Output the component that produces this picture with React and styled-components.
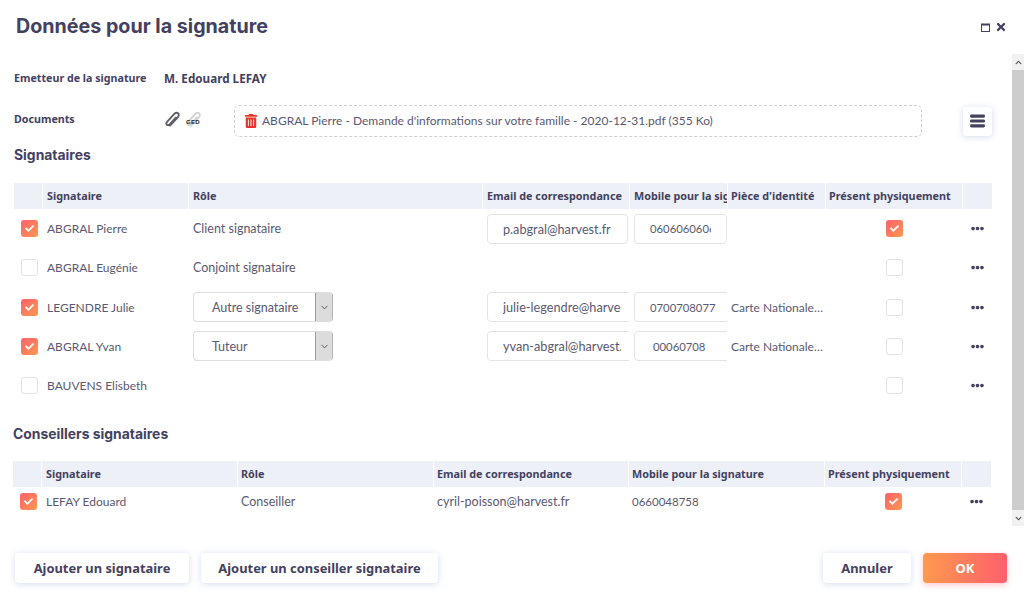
import React from "react";
import styled, { createGlobalStyle } from "styled-components";
import {
  FaCheck,
  FaChevronDown,
  FaChevronUp,
  FaEllipsisH,
  FaTimes,
  FaTrashAlt,
} from "react-icons/fa";
import { ChevronDown } from "lucide-react";

const INK = "#43415f";
const TEXT = "#5a5973";
const HEAD_BG = "#edf0f7";
const SIGNER_COLS = "28px 145px 293px 146px 97px 97px 136px 29px";
const ADVISOR_COLS = "28px 195px 195px 194px 195px 136px 29px";

const signers = [
  { name: "ABGRAL Pierre", checked: true, role: "Client signataire", email: "p.abgral@harvest.fr", mobile: "0606060606", present: true, fit: true },
  { name: "ABGRAL Eugénie", role: "Conjoint signataire" },
  { name: "LEGENDRE Julie", checked: true, select: "Autre signataire", email: "julie-legendre@harvest.fr", mobile: "0700708077", piece: "Carte Nationale d'identité" },
  { name: "ABGRAL Yvan", checked: true, select: "Tuteur", email: "yvan-abgral@harvest.fr", mobile: "00060708", piece: "Carte Nationale d'identité", indent: 18 },
  { name: "BAUVENS Elisbeth" },
];

const App = () => (
  <>
    <GlobalStyle />
    <Dialog>
      <TitleBar>
        <Title>Données pour la signature</Title>
        <WindowActions>
          <MaximizeIcon />
          <FaTimes size={12} />
        </WindowActions>
      </TitleBar>
      <Middle>
        <Body>
          <InfoRow>
            <InfoLabel>Emetteur de la signature</InfoLabel>
            <InfoValue>M. Edouard LEFAY</InfoValue>
          </InfoRow>
          <DocumentsRow>
            <InfoLabel $raised>Documents</InfoLabel>
            <AttachIcons>
              <ClipIcon />
              <GedIcon>
                <ClipIcon $light />
                <GedText>GED</GedText>
              </GedIcon>
            </AttachIcons>
            <DropZone>
              <FaTrashAlt size={14} color="#e8352a" />
              <span>ABGRAL Pierre - Demande d'informations sur votre famille - 2020-12-31.pdf (355 Ko)</span>
            </DropZone>
            <MenuButton>
              <BarsIcon />
            </MenuButton>
          </DocumentsRow>
          <SectionTitle>Signataires</SectionTitle>
          <Table>
            <HeadRow $cols={SIGNER_COLS}>
              <HeadCell />
              <HeadCell>Signataire</HeadCell>
              <HeadCell>Rôle</HeadCell>
              <HeadCell>Email de correspondance</HeadCell>
              <HeadCell>Mobile pour la signature</HeadCell>
              <HeadCell $tight>Pièce d'identité</HeadCell>
              <HeadCell $tight>Présent physiquement</HeadCell>
              <HeadCell />
            </HeadRow>
            {signers.map((s) => (
              <Row key={s.name} $cols={SIGNER_COLS} $height="39.25px">
                <Cell>
                  <Checkbox $checked={s.checked}>{s.checked && <FaCheck size={9} />}</Checkbox>
                </Cell>
                <NameCell>{s.name}</NameCell>
                <Cell>
                  {s.select ? (
                    <SelectBox>
                      <SelectValue>{s.select}</SelectValue>
                      <SelectArrow>
                        <ChevronDown size={11} strokeWidth={1.8} />
                      </SelectArrow>
                    </SelectBox>
                  ) : (
                    s.role
                  )}
                </Cell>
                <Cell>
                  {s.email && <Input $width={s.fit ? "141px" : "150px"} readOnly value={s.email} />}
                </Cell>
                <Cell>
                  {s.mobile && (
                    <Input
                      $width={s.fit ? "93px" : "110px"}
                      $indent={s.indent || 15}
                      $size="11.3px"
                      readOnly
                      value={s.mobile}
                    />
                  )}
                </Cell>
                <NameCell $tight>{s.piece && <Ellipsis>{s.piece}</Ellipsis>}</NameCell>
                <Cell $center>
                  <Checkbox $checked={s.present}>{s.present && <FaCheck size={9} />}</Checkbox>
                </Cell>
                <Cell $center>
                  <FaEllipsisH size={13} color={INK} />
                </Cell>
              </Row>
            ))}
          </Table>
          <SectionTitle $advisors>Conseillers signataires</SectionTitle>
          <Table $advisors>
            <HeadRow $cols={ADVISOR_COLS}>
              <HeadCell />
              <HeadCell>Signataire</HeadCell>
              <HeadCell $tight>Rôle</HeadCell>
              <HeadCell $tight>Email de correspondance</HeadCell>
              <HeadCell $tight>Mobile pour la signature</HeadCell>
              <HeadCell $tight>Présent physiquement</HeadCell>
              <HeadCell />
            </HeadRow>
            <Row $cols={ADVISOR_COLS} $height="28px">
              <Cell>
                <Checkbox $checked>
                  <FaCheck size={9} />
                </Checkbox>
              </Cell>
              <NameCell>LEFAY Edouard</NameCell>
              <Cell $tight>Conseiller</Cell>
              <Cell $tight>cyril-poisson@harvest.fr</Cell>
              <NumberCell $tight>0660048758</NumberCell>
              <Cell $center>
                <Checkbox $checked>
                  <FaCheck size={9} />
                </Checkbox>
              </Cell>
              <Cell $center>
                <FaEllipsisH size={13} color={INK} />
              </Cell>
            </Row>
          </Table>
        </Body>
        <Scrollbar>
          <ScrollArrow>
            <FaChevronUp size={7} />
          </ScrollArrow>
          <ScrollThumb />
          <ScrollArrow>
            <FaChevronDown size={7} />
          </ScrollArrow>
        </Scrollbar>
      </Middle>
      <Footer>
        <FooterGroup>
          <Button $width="174px">Ajouter un signataire</Button>
          <Button $width="237px">Ajouter un conseiller signataire</Button>
        </FooterGroup>
        <FooterGroup>
          <Button $width="88px">Annuler</Button>
          <Button $width="84px" $primary>
            OK
          </Button>
        </FooterGroup>
      </Footer>
    </Dialog>
  </>
);

const ClipIcon = ({ $light }) => (
  <svg width="17" height="17" viewBox="0 0 17 17" fill="none">
    <path
      d="M6 14.5 14 6c1.1-1.2 1-2.8 0-3.7-1-.9-2.4-.7-3.4.4L3 10.8c-.9 1-.9 2.2-.1 2.9.8.7 1.9.5 2.7-.3l6.2-6.8"
      stroke={$light ? "#d4d4d4" : "#5f5f68"}
      strokeWidth="1.9"
      strokeLinecap="round"
    />
  </svg>
);

const MaximizeIcon = () => (
  <svg width="9" height="9" viewBox="0 0 9 9" fill="none">
    <rect x="0.5" y="1" width="8" height="7.5" stroke={INK} />
    <rect x="0.5" y="1" width="8" height="1.5" fill={INK} />
  </svg>
);

const BarsIcon = () => (
  <svg width="15" height="14" viewBox="0 0 15 14" fill={INK}>
    <rect x="0" y="0.5" width="15" height="3.2" rx="1.4" />
    <rect x="0" y="5.4" width="15" height="3.2" rx="1.4" />
    <rect x="0" y="10.3" width="15" height="3.2" rx="1.4" />
  </svg>
);

export default App;

const GlobalStyle = createGlobalStyle`
  html, body {
    margin: 0;
    padding: 0;
    background: #fff;
  }
  body {
    font-family: "Lato", "Noto Sans", sans-serif;
    font-size: 12px;
    color: ${TEXT};
  }
`;

const Dialog = styled.div`
  width: 1024px;
  height: 599px;
  display: flex;
  flex-direction: column;
  overflow: hidden;
`;

const TitleBar = styled.div`
  height: 54px;
  flex: none;
  display: flex;
  align-items: center;
  justify-content: space-between;
  padding: 0 17px 0 16px;
`;

const Title = styled.h1`
  margin: 0 0 2px;
  font-family: "Inter", sans-serif;
  font-size: 19.7px;
  font-weight: 700;
  color: ${INK};
`;

const WindowActions = styled.div`
  display: flex;
  align-items: center;
  gap: 5px;
  color: ${INK};
`;

const Middle = styled.div`
  height: 472px;
  flex: none;
  display: flex;
  justify-content: space-between;
`;

const Body = styled.div`
  width: 978px;
  margin-left: 14px;
  padding-top: 8px;
`;

const InfoRow = styled.div`
  height: 32px;
  display: flex;
  align-items: center;
`;

const DocumentsRow = styled(InfoRow)`
  margin-top: 11px;
`;

const InfoLabel = styled.div`
  width: 150px;
  padding-bottom: ${({ $raised }) => ($raised ? "4px" : "0")};
  font-family: "Noto Sans", sans-serif;
  font-size: 10.7px;
  font-weight: 700;
  color: ${INK};
`;

const InfoValue = styled.div`
  font-family: "Noto Sans", sans-serif;
  font-size: 11.7px;
  font-weight: 700;
  color: ${INK};
`;

const AttachIcons = styled.div`
  width: 70px;
  display: flex;
  align-items: center;
  gap: 4px;
  padding-bottom: 4px;
`;

const GedIcon = styled.div`
  position: relative;
  width: 17px;
  height: 17px;
`;

const GedText = styled.span`
  position: absolute;
  left: 1px;
  top: 8px;
  font-family: "Liberation Sans", sans-serif;
  font-size: 6px;
  font-weight: 700;
  letter-spacing: 0.3px;
  color: #222;
`;

const DropZone = styled.div`
  width: 688px;
  height: 32px;
  box-sizing: border-box;
  display: flex;
  align-items: center;
  gap: 4px;
  padding: 0 0 1px 9px;
  border: 1px dashed #cfcfcf;
  border-radius: 5px;
`;

const MenuButton = styled.div`
  width: 29px;
  height: 29px;
  margin-left: 41px;
  display: flex;
  align-items: center;
  justify-content: center;
  border-radius: 4px;
  background: #fff;
  box-shadow: 0 1px 6px rgba(90, 110, 200, 0.25);
`;

const SectionTitle = styled.h2`
  height: 20px;
  margin: ${({ $advisors }) => ($advisors ? "19px 0 17px -1px" : "8px 0 18px")};
  font-family: "Inter", sans-serif;
  font-size: 13.9px;
  font-weight: 700;
  line-height: 20px;
  color: ${INK};
`;

const Table = styled.div`
  margin-left: ${({ $advisors }) => ($advisors ? "-1px" : "0")};
`;

const HeadRow = styled.div`
  display: grid;
  grid-template-columns: ${({ $cols }) => $cols};
  gap: 1px;
  height: 26px;
`;

const HeadCell = styled.div`
  display: flex;
  align-items: center;
  padding: 0 0 2px ${({ $tight }) => ($tight ? "3px" : "4px")};
  background: ${HEAD_BG};
  font-family: "Noto Sans", sans-serif;
  font-size: 10.8px;
  font-weight: 700;
  color: ${INK};
  white-space: nowrap;
  overflow: hidden;
`;

const Row = styled.div`
  display: grid;
  grid-template-columns: ${({ $cols }) => $cols};
  gap: 1px;
  height: ${({ $height }) => $height};
`;

const Cell = styled.div`
  display: flex;
  align-items: center;
  justify-content: ${({ $center }) => ($center ? "center" : "flex-start")};
  padding-left: ${({ $center, $tight }) => ($center ? "0" : $tight ? "3px" : "4px")};
  min-width: 0;
  font-size: 12.5px;
  white-space: nowrap;
  overflow: hidden;

  &:first-child {
    padding-left: 7px;
  }
`;

const NameCell = styled(Cell)`
  font-size: 12px;
`;

const NumberCell = styled(Cell)`
  font-size: 11.5px;
`;

const Checkbox = styled.span`
  width: 17px;
  height: 17px;
  flex: none;
  box-sizing: border-box;
  border-radius: 3px;
  display: inline-flex;
  align-items: center;
  justify-content: center;
  color: #fff;
  border: ${({ $checked }) => ($checked ? "none" : "1.5px solid #e2e2e2")};
  background: ${({ $checked }) =>
    $checked ? "linear-gradient(135deg, #ff5f6d, #ff9a4d)" : "#fff"};
`;

const SelectBox = styled.div`
  width: 140px;
  height: 30px;
  flex: none;
  box-sizing: border-box;
  display: flex;
  border: 1px solid #dedede;
  border-right-color: #b5b5b5;
  border-radius: 4px;
  overflow: hidden;
`;

const SelectValue = styled.div`
  flex: 1;
  display: flex;
  align-items: center;
  padding-left: 18px;
`;

const SelectArrow = styled.div`
  width: 16px;
  display: flex;
  align-items: center;
  justify-content: center;
  background: #dcdcdc;
  border-left: 1px solid #999;
  color: #3c3c3c;
`;

const Input = styled.input`
  width: ${({ $width }) => $width};
  height: 30px;
  flex: none;
  box-sizing: border-box;
  padding: 0 15px 0 ${({ $indent }) => $indent || 15}px;
  border: 1px solid #e4e4e4;
  border-radius: 4px;
  outline: none;
  font-family: inherit;
  font-size: ${({ $size }) => $size || "12.7px"};
  color: ${TEXT};
`;

const Ellipsis = styled.span`
  width: 93px;
  overflow: hidden;
  text-overflow: ellipsis;
`;

const Scrollbar = styled.div`
  width: 12px;
  display: flex;
  flex-direction: column;
  background: #cdcdcd;
`;

const ScrollArrow = styled.div`
  height: 16px;
  display: flex;
  align-items: center;
  justify-content: center;
  background: #f1f1f1;
  color: #505050;
`;

const ScrollThumb = styled.div`
  flex: 1;
`;

const Footer = styled.div`
  flex: 1;
  display: flex;
  justify-content: space-between;
  padding: 27px 17px 0 15px;
`;

const FooterGroup = styled.div`
  display: flex;
  gap: 12px;
`;

const Button = styled.div`
  width: ${({ $width }) => $width};
  height: 30px;
  display: flex;
  align-items: center;
  justify-content: center;
  border-radius: 4px;
  font-family: "Noto Sans", sans-serif;
  font-size: 12.9px;
  font-weight: 700;
  color: ${({ $primary }) => ($primary ? "#fff" : INK)};
  background: ${({ $primary }) =>
    $primary ? "linear-gradient(90deg, #ff9a4d, #ff5f6d)" : "#fff"};
  box-shadow: ${({ $primary }) =>
    $primary ? "0 2px 6px rgba(255, 95, 109, 0.35)" : "0 1px 6px rgba(90, 110, 200, 0.25)"};
`;
